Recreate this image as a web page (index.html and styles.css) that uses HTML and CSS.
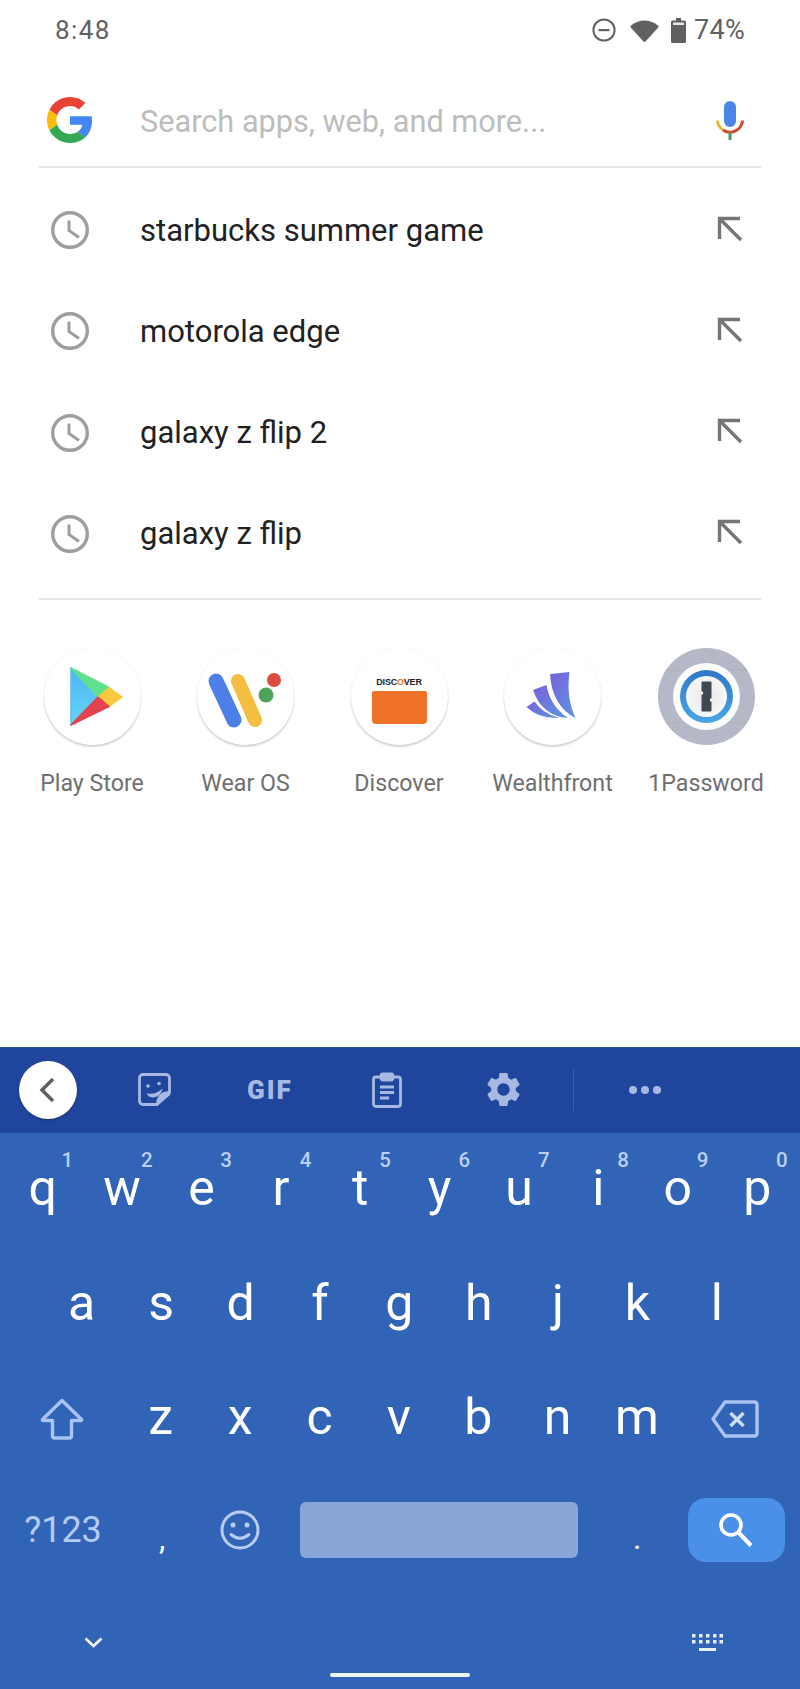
FILE: index.html
```html
<!DOCTYPE html>
<html lang="en">
<head>
<meta charset="utf-8">
<title>Search</title>
<link rel="stylesheet" href="styles.css">
</head>
<body>
<svg class="defs" width="0" height="0" aria-hidden="true">
  <symbol id="clock" viewBox="0 0 38 38"><circle cx="19" cy="19" r="17.3" fill="none" stroke="#9e9e9e" stroke-width="3.4"/><path d="M18 9.5V19.5L28 26.5" fill="none" stroke="#9e9e9e" stroke-width="3"/></symbol>
  <symbol id="arrow" viewBox="0 0 26 26"><path d="M2.5 23V2.500H23M3 3L24 24" fill="none" stroke="#757575" stroke-width="3.400"/></symbol>
</svg>
<div class="phone">
  <div class="status">
    <span class="time">8:48</span>
    <div class="status-right">
      <svg class="st-dnd" viewBox="0 0 24 24"><circle cx="12" cy="12" r="10.6" fill="none" stroke="#616161" stroke-width="2"/><rect x="6.500" y="11" width="11" height="2.200" fill="#616161"/></svg>
      <svg class="st-wifi" viewBox="0 0 29 23"><path d="M1 6.500Q14.500-3.500 28 6.500a1.500 1.500 0 0 1 .2 2L15.500 22.500a1.400 1.400 0 0 1-2 0L.8 8.500a1.500 1.500 0 0 1 .2-2Z" fill="#616161"/></svg>
      <svg class="st-batt" viewBox="0 0 15 25"><path d="M5 0h5v2.500h3.500a1.500 1.500 0 0 1 1.500 1.500v19.500a1.500 1.500 0 0 1-1.500 1.500h-12A1.500 1.500 0 0 1 0 23.500V4a1.500 1.500 0 0 1 1.500-1.500H5Z" fill="#616161"/><rect x="2" y="4.500" width="11" height="2.500" fill="#e8e8e8"/></svg>
      <span class="pct">74%</span>
    </div>
  </div>

  <div class="search">
    <svg class="g-logo" viewBox="0 0 48 48">
      <path fill="#EA4335" d="M24 9.500c3.540 0 6.710 1.220 9.210 3.600l6.850-6.850C35.900 2.380 30.470 0 24 0 14.620 0 6.510 5.380 2.560 13.220l7.980 6.190C12.430 13.720 17.740 9.500 24 9.500z"/>
      <path fill="#4285F4" d="M46.980 24.550c0-1.570-.15-3.090-.38-4.550H24v9.020h12.940c-.58 2.960-2.260 5.480-4.780 7.180l7.730 6c4.510-4.180 7.090-10.360 7.090-17.65z"/>
      <path fill="#FBBC05" d="M10.530 28.590c-.48-1.450-.76-2.990-.76-4.590s.27-3.140.76-4.590l-7.980-6.190C.92 16.460 0 20.120 0 24c0 3.880.92 7.540 2.560 10.780l7.970-6.190z"/>
      <path fill="#34A853" d="M24 48c6.480 0 11.930-2.130 15.890-5.810l-7.730-6c-2.150 1.450-4.920 2.300-8.160 2.300-6.260 0-11.570-4.220-13.470-9.910l-7.980 6.190C6.510 42.620 14.620 48 24 48z"/>
    </svg>
    <span class="placeholder">Search apps, web, and more...</span>
    <svg class="mic" viewBox="0 0 28 39">
      <rect x="8" y="0" width="12" height="26" rx="6" fill="#4a86e8"/>
      <path d="M1.500 19.500A12.500 12.500 0 0 0 7 29" fill="none" stroke="#e2b93b" stroke-width="3"/>
      <path d="M7 29A12.500 12.500 0 0 0 26.500 19.500" fill="none" stroke="#d0492f" stroke-width="3"/>
      <rect x="12.500" y="31" width="3" height="8" fill="#4f9d5b"/>
    </svg>
  </div>
  <div class="rule"></div>

  <div class="suggestions">
    <div class="sug"><svg class="clock"><use href="#clock"/></svg><span class="sug-text">starbucks summer game</span><svg class="arrow"><use href="#arrow"/></svg></div>
    <div class="sug"><svg class="clock"><use href="#clock"/></svg><span class="sug-text">motorola edge</span><svg class="arrow"><use href="#arrow"/></svg></div>
    <div class="sug"><svg class="clock"><use href="#clock"/></svg><span class="sug-text">galaxy z flip 2</span><svg class="arrow"><use href="#arrow"/></svg></div>
    <div class="sug"><svg class="clock"><use href="#clock"/></svg><span class="sug-text">galaxy z flip</span><svg class="arrow"><use href="#arrow"/></svg></div>
  </div>
  <div class="rule"></div>

  <div class="apps">
    <div class="app">
      <div class="app-icon">
        <svg class="app-svg" viewBox="0 0 97 97">
          <defs><linearGradient id="pb" x1="0" y1="0" x2="0" y2="1"><stop offset="0" stop-color="#4fb4ef"/><stop offset="1" stop-color="#62d6fb"/></linearGradient></defs>
          <g stroke-linejoin="round" stroke-width="1.500">
            <polygon points="27,20 27,77 54,49" fill="url(#pb)" stroke="#55c0f3"/>
            <polygon points="27,20 65,39.500 54,49" fill="#5fe08d" stroke="#5fe08d"/>
            <polygon points="65,39.500 78,49 65,58.500 54,49" fill="#f8c93e" stroke="#f8c93e"/>
            <polygon points="27,77 54,49 65,58.500" fill="#e2434f" stroke="#e2434f"/>
          </g>
        </svg>
      </div>
      <span class="app-name">Play Store</span>
    </div>
    <div class="app">
      <div class="app-icon">
        <svg class="app-svg" viewBox="0 0 97 97">
          <path d="M19 33L37 72" stroke="#4c7fe8" stroke-width="15" stroke-linecap="round"/>
          <path d="M41 33L58 72" stroke="#f3bd3f" stroke-width="14" stroke-linecap="round"/>
          <circle cx="77" cy="32" r="7" fill="#d94c3f"/>
          <circle cx="69" cy="47" r="7.500" fill="#4fa25a"/>
        </svg>
      </div>
      <span class="app-name">Wear OS</span>
    </div>
    <div class="app">
      <div class="app-icon app-discover">
        <span class="disc-text">DISC<b class="disc-o">O</b>VER</span>
        <div class="disc-card"></div>
      </div>
      <span class="app-name">Discover</span>
    </div>
    <div class="app">
      <div class="app-icon">
        <svg class="app-svg" viewBox="0 0 97 97">
          <defs><linearGradient id="wf" x1="0" y1="0" x2="1" y2="1"><stop offset="0" stop-color="#7a62d8"/><stop offset="1" stop-color="#5a95e4"/></linearGradient></defs>
          <path d="M46 26L65.500 24Q62 50 71.500 70Q48 58 46 26Z" fill="url(#wf)"/>
          <path d="M29 42L42.500 37Q46 58 64 70Q38 68 29 42Z" fill="url(#wf)"/>
          <path d="M22.500 59L30.500 53.500Q38 65 55 70Q35 71 22.500 59Z" fill="url(#wf)"/>
        </svg>
      </div>
      <span class="app-name">Wealthfront</span>
    </div>
    <div class="app">
      <div class="app-icon app-1p">
        <svg class="app-svg" viewBox="0 0 97 97">
          <defs>
            <linearGradient id="op" x1="0" y1="0" x2="0" y2="1"><stop offset="0" stop-color="#2f78c8"/><stop offset="1" stop-color="#49a6e6"/></linearGradient>
            <radialGradient id="oc"><stop offset="0" stop-color="#e4e4e6"/><stop offset="1" stop-color="#f8f8f8"/></radialGradient>
          </defs>
          <circle cx="48.500" cy="48.500" r="48.500" fill="#b5b8c7"/>
          <path d="M8 22H89M0.500 48H96.500M8 75H89" stroke="#adb1c0" stroke-width="1"/>
          <circle cx="48.500" cy="48.500" r="33.500" fill="#fdfdfe"/>
          <circle cx="48.500" cy="48.500" r="26.500" fill="url(#op)"/>
          <circle cx="48.500" cy="48.500" r="20.500" fill="url(#oc)"/>
          <rect x="43.500" y="33.500" width="10" height="30" rx="1" fill="#3f4753"/>
          <circle cx="43.500" cy="45" r="1.800" fill="#f1f1f2"/>
          <circle cx="53.500" cy="52" r="1.800" fill="#f1f1f2"/>
        </svg>
      </div>
      <span class="app-name">1Password</span>
    </div>
  </div>

  <div class="keyboard">
    <div class="toolbar">
      <div class="back"><svg class="back-ic" viewBox="0 0 16 26"><path d="M14 2L3 13L14 24" fill="none" stroke="#616161" stroke-width="3.500"/></svg></div>
      <svg class="tb-sticker" viewBox="0 0 33 33" fill="none" stroke="#a7b9e3" stroke-width="2.800">
        <path d="M5 1.500H28A3.500 3.500 0 0 1 31.500 5V19L19 31.500H5A3.500 3.500 0 0 1 1.500 28V5A3.500 3.500 0 0 1 5 1.500Z"/>
        <path d="M31 19.500C24 20 20 24 19.500 31L31 21Z" fill="#a7b9e3"/>
        <circle cx="10" cy="13" r="1.800" fill="#a7b9e3" stroke="none"/><circle cx="21" cy="10.500" r="1.800" fill="#a7b9e3" stroke="none"/>
        <path d="M8.500 20Q16 23 24.500 15.500Q23 24 15 24.500Q10.500 24.500 8.500 20Z" fill="#a7b9e3" stroke="none"/>
      </svg>
      <span class="tb-gif">GIF</span>
      <svg class="tb-clip" viewBox="0 0 30 36" fill="none" stroke="#a7b9e3" stroke-width="2.800">
        <rect x="1.500" y="5" width="27" height="29.500" rx="2.500"/>
        <rect x="9" y="2" width="12" height="6" rx="2" fill="#a7b9e3"/>
        <path d="M8 15H22M8 20.500H22M8 26H17"/>
      </svg>
      <svg class="tb-gear" viewBox="2.400 2 19.200 20"><path fill="#a7b9e3" d="M19.140 12.940c.04-.3.060-.61.060-.94 0-.32-.02-.64-.07-.94l2.030-1.580c.18-.14.23-.41.120-.61l-1.920-3.320c-.12-.22-.37-.29-.59-.22l-2.390.96c-.5-.38-1.030-.7-1.620-.94l-.36-2.540c-.04-.24-.24-.41-.48-.41h-3.840c-.24 0-.43.170-.47.410l-.36 2.540c-.59.240-1.130.570-1.620.940l-2.390-.96c-.22-.08-.47 0-.59.220L2.740 8.870c-.12.210-.08.470.120.610l2.030 1.580c-.05.3-.09.630-.09.940s.02.640.070.940l-2.030 1.580c-.18.140-.23.410-.12.610l1.920 3.320c.12.220.37.290.59.220l2.390-.96c.5.380 1.030.7 1.620.94l.36 2.540c.05.240.24.410.48.410h3.840c.24 0 .44-.17.47-.41l.36-2.540c.59-.24 1.130-.56 1.620-.94l2.390.96c.22.080.47 0 .59-.22l1.920-3.320c.12-.22.070-.47-.12-.61l-2.010-1.580zM12 15.600c-1.980 0-3.600-1.620-3.600-3.600s1.620-3.600 3.600-3.600 3.600 1.620 3.600 3.600-1.620 3.600-3.600 3.600z"/></svg>
      <div class="tb-sep"></div>
      <svg class="tb-dots" viewBox="0 0 34 10"><circle cx="5" cy="5" r="4" fill="#a7b9e3"/><circle cx="17" cy="5" r="4" fill="#a7b9e3"/><circle cx="29" cy="5" r="4" fill="#a7b9e3"/></svg>
    </div>

    <div class="keys">
      <div class="row row-top">
        <div class="key">q<span class="hint">1</span></div>
        <div class="key">w<span class="hint">2</span></div>
        <div class="key">e<span class="hint">3</span></div>
        <div class="key">r<span class="hint">4</span></div>
        <div class="key">t<span class="hint">5</span></div>
        <div class="key">y<span class="hint">6</span></div>
        <div class="key">u<span class="hint">7</span></div>
        <div class="key">i<span class="hint">8</span></div>
        <div class="key">o<span class="hint">9</span></div>
        <div class="key">p<span class="hint">0</span></div>
      </div>
      <div class="row row-home">
        <div class="key">a</div><div class="key">s</div><div class="key">d</div><div class="key">f</div><div class="key">g</div><div class="key">h</div><div class="key">j</div><div class="key">k</div><div class="key">l</div>
      </div>
      <div class="row">
        <div class="key-wide key-shift"><svg class="ic-shift" viewBox="0 0 44 42"><path d="M22 2.500L41.500 21.500A.8.8 0 0 1 41 22.500H31.500V38A2 2 0 0 1 29.500 40H14.500A2 2 0 0 1 12.500 38V22.500H3A.8.8 0 0 1 2.500 21.500Z" fill="none" stroke="#a9c3f2" stroke-width="3.400" stroke-linejoin="round"/></svg></div>
        <div class="key">z</div><div class="key">x</div><div class="key">c</div><div class="key">v</div><div class="key">b</div><div class="key">n</div><div class="key">m</div>
        <div class="key-del"><svg class="ic-del" viewBox="0 0 48 38"><path d="M14 2H43.500A2.500 2.500 0 0 1 46 4.500V33.500A2.500 2.500 0 0 1 43.500 36H14L2 19Z" fill="none" stroke="#a9c3f2" stroke-width="3.400" stroke-linejoin="round"/><path d="M19.500 13L32.500 26M32.500 13L19.500 26" stroke="#cfdcf6" stroke-width="3.400"/></svg></div>
      </div>
      <div class="row row-bottom">
        <div class="key-wide key-sym">?123</div>
        <div class="key key-punct">,</div>
        <div class="key key-emoji"><svg class="ic-emoji" viewBox="0 0 40 40"><circle cx="20" cy="20" r="18" fill="none" stroke="#b9cdf3" stroke-width="3"/><circle cx="13" cy="15" r="2.500" fill="#b9cdf3"/><circle cx="27" cy="15" r="2.500" fill="#b9cdf3"/><path d="M11 24.500Q20 32 29 24.500" fill="none" stroke="#b9cdf3" stroke-width="3" stroke-linecap="round"/></svg></div>
        <div class="space"></div>
        <div class="key-period key-punct">.</div>
        <div class="go"><svg class="ic-search" viewBox="0 0 34 34"><circle cx="12" cy="12" r="10" fill="none" stroke="#fff" stroke-width="3.600"/><path d="M19.500 19.500L32 32.500" stroke="#fff" stroke-width="4"/></svg></div>
      </div>
    </div>

    <div class="kb-foot">
      <div class="foot-row">
        <svg class="ic-chev" viewBox="0 0 19 11"><path d="M1.500 1.500L9.500 9L17.500 1.500" fill="none" stroke="#fff" stroke-width="2.600"/></svg>
        <svg class="ic-kb" viewBox="0 0 31 17" fill="#e9eefb">
          <path d="M0 0h3.500v3.500H0zM7 0h3.500v3.500H7zM14 0h3.500v3.500h-3.500zM21 0h3.500v3.500h-3.500zM27.500 0h3.500v3.500h-3.500zM0 6h3.500v3.500H0zM7 6h3.500v3.500H7zM14 6h3.500v3.500h-3.500zM21 6h3.500v3.500h-3.500zM27.500 6h3.500v3.500h-3.500zM7 14h17v3H7z"/>
        </svg>
      </div>
      <div class="home-bar"></div>
    </div>
  </div>
</div>
</body>
</html>
```

FILE: styles.css
```css
* { box-sizing: border-box; }
html, body { margin: 0; padding: 0; }
body { background: #fff; font-family: Roboto, "Liberation Sans", sans-serif; }
.defs { position: absolute; }
.phone { width: 800px; height: 1689px; display: flex; flex-direction: column; overflow: hidden; background: #fff; }

.status { height: 60px; padding: 0 55px; display: flex; align-items: center; justify-content: space-between; color: #616161; }
.time { font-size: 26px; letter-spacing: 1.4px; }
.status-right { display: flex; align-items: center; }
.st-dnd { width: 24px; height: 24px; }
.st-wifi { width: 29px; height: 23px; margin-left: 14px; }
.st-batt { width: 15px; height: 25px; margin-left: 12px; }
.pct { font-size: 27px; margin-left: 8px; letter-spacing: .3px; }

.search { height: 106px; padding: 14px 56px 0 47px; display: flex; align-items: center; }
.g-logo { width: 46px; height: 46px; flex: none; }
.placeholder { flex: 1; margin-left: 47px; padding-top: 3px; font-size: 30.700px; color: #bdbdbd; }
.mic { width: 28px; height: 39px; flex: none; }
.rule { height: 2px; margin: 0 39px; background: #e4e4e4; flex: none; }

.suggestions { padding: 11.500px 0 13.500px; }
.sug { height: 101.250px; padding: 0 57px 0 51px; display: flex; align-items: center; }
.clock { width: 38px; height: 38px; flex: none; }
.sug-text { flex: 1; margin-left: 51px; font-size: 31px; color: #212121; }
.arrow { width: 26px; height: 26px; flex: none; margin-top: -3px; }

.apps { padding: 48px 0 0 15.250px; display: grid; grid-template-columns: repeat(5, 153.500px); }
.app { display: flex; flex-direction: column; align-items: center; }
.app-icon { width: 97px; height: 97px; border-radius: 50%; background: #fff; box-shadow: 0 2px 2px rgba(0,0,0,.17), 0 0 2px rgba(0,0,0,.07); }
.app-svg { width: 97px; height: 97px; display: block; }
.app-1p { box-shadow: none; }
.app-discover { display: flex; flex-direction: column; align-items: center; padding-top: 28px; }
.disc-text { font-family: "Liberation Sans", sans-serif; font-weight: 700; font-size: 9px; line-height: 12px; color: #222; letter-spacing: -.2px; }
.disc-o { color: #ef7326; }
.disc-card { width: 55px; height: 33px; margin-top: 3px; background: #ef7228; border-radius: 2px 2px 4px 4px; }
.app-name { margin-top: 24px; font-size: 23.200px; line-height: 28px; color: #6f6f6f; white-space: nowrap; }

.keyboard { margin-top: auto; height: 642px; flex: none; background: #3163b7; display: flex; flex-direction: column; }
.toolbar { height: 86px; flex: none; padding: 0 0 2px 19px; display: flex; align-items: center; background: #1f459c; border-top: 1px solid #2a5590; }
.back { width: 58px; height: 58px; border-radius: 50%; background: #fff; display: flex; align-items: center; justify-content: center; flex: none; box-shadow: 0 1px 2px rgba(0,0,0,.3); }
.back-ic { width: 16px; height: 26px; margin-right: 2px; }
.tb-sticker { width: 33px; height: 33px; margin-left: 61px; flex: none; }
.tb-gif { width: 46px; margin-left: 76px; font-family: Roboto, sans-serif; font-weight: 900; font-size: 26px; letter-spacing: 2px; color: #a7b9e3; flex: none; }
.tb-clip { width: 30px; height: 36px; margin-left: 79px; flex: none; }
.tb-gear { width: 33px; height: 35px; margin-left: 85px; flex: none; }
.tb-sep { width: 1px; height: 42px; margin-left: 53px; background: #3a5ea8; flex: none; }
.tb-dots { width: 34px; height: 10px; margin-left: 54px; flex: none; }

.keys { height: 458px; flex: none; display: flex; flex-direction: column; }
.row { height: 114.500px; flex: none; padding-left: 3.500px; display: flex; align-items: center; }
.row-top { padding-left: 3px; }
.row-home { padding-left: 42px; }
.row-bottom { padding-bottom: 7px; }
.key { position: relative; width: 79.400px; height: 100%; flex: none; padding-bottom: 4px; display: flex; align-items: center; justify-content: center; font-size: 50px; color: #fff; }
.hint { position: absolute; top: 13px; right: 5px; width: 20px; text-align: center; font-size: 20.500px; line-height: 28px; font-weight: 500; color: #bccff2; }
.key-wide { width: 119px; flex: none; display: flex; align-items: center; justify-content: center; }
.key-shift { width: 117.500px; }
.key-del { width: 116px; flex: none; display: flex; align-items: center; justify-content: center; }
.key-sym { font-size: 36px; font-weight: 400; color: #b5caf1; }
.key-punct { font-size: 32px; color: #fff; padding: 16px 0 0; }
.key-emoji { padding: 0 4px 0 0; }
.key-period { width: 110px; flex: none; text-align: center; padding-left: 8px; }
.ic-shift { width: 44px; height: 42px; }
.ic-del { width: 48px; height: 38px; }
.ic-emoji { width: 40px; height: 40px; }
.space { width: 278px; height: 56px; margin-left: 19px; flex: none; background: #88a7d8; border-radius: 6px; }
.go { width: 97px; height: 64px; flex: none; background: #4a90e8; border-radius: 18px; display: flex; align-items: center; justify-content: center; }
.ic-search { width: 34px; height: 34px; margin-right: 2px; }

.kb-foot { flex: 1; display: flex; flex-direction: column; align-items: center; padding-top: 43px; }
.foot-row { width: 100%; height: 17px; padding: 0 77px 0 84px; display: flex; align-items: center; justify-content: space-between; }
.ic-chev { width: 19px; height: 11px; }
.ic-kb { width: 31px; height: 17px; }
.home-bar { width: 140px; height: 4px; margin-top: 22px; background: #eef3fc; border-radius: 2px; }
```
